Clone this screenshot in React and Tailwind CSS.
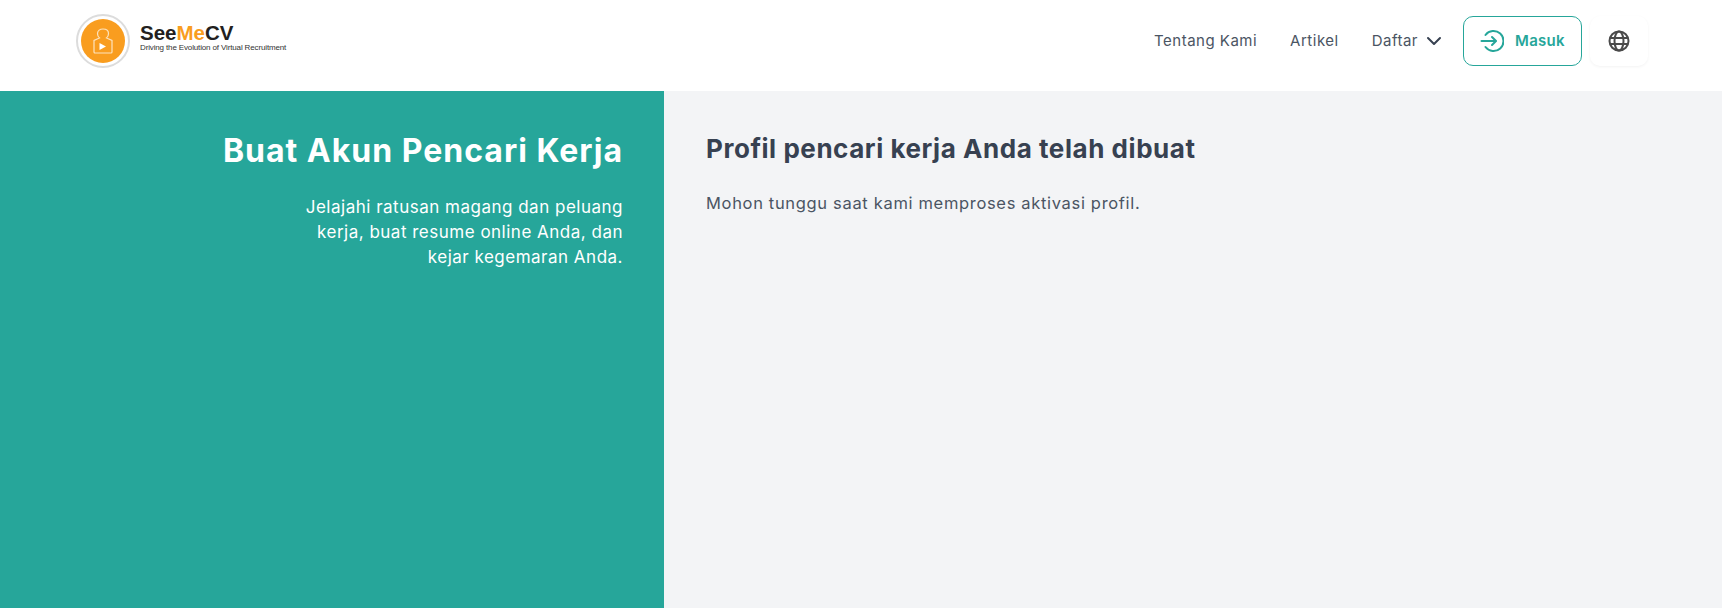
import React from 'react';

const font = { sans: "font-['Inter','Noto_Sans',sans-serif]" };

function Logo() {
  return (
    <div className="flex items-center gap-[10px]">
      <div className="flex h-[54px] w-[54px] items-center justify-center rounded-full border-2 border-[#dcdcdc] bg-white">
        <div className="flex h-[44px] w-[44px] items-center justify-center rounded-full bg-[#f99d1f]">
          <svg width="20" height="26" viewBox="0 0 20 26" fill="none" stroke="#fde3bd" strokeWidth="1.2">
            <path d="M6.5 10C5 9 4.5 7 4.5 5.5 4.5 2.5 7 1 10 1s5.500 1.500 5.500 4.500c0 1.500-.5 3.500-2 4.500l5.500 2.500V24a1 1 0 0 1-1 1H2a1 1 0 0 1-1-1V12.500z" />
            <path d="M6.500 15v7l6.500-3.500z" fill="#fff" stroke="none" />
          </svg>
        </div>
      </div>
      <div className="pb-[7px] font-['Liberation_Sans',sans-serif] text-[#231f20]">
        <div className="text-[20.5px] font-bold leading-[20px]">
          See<span className="text-[#f99d1f]">Me</span>CV
        </div>
        <div className="text-[8px] leading-[9px] tracking-[-0.14px] whitespace-nowrap text-[#333]">Driving the Evolution of Virtual Recruitment</div>
      </div>
    </div>
  );
}

function Header() {
  return (
    <header className="flex h-[91px] items-center justify-between bg-white pb-[9px] pl-[76px] pr-[74px]">
      <Logo />
      <nav className="flex items-center text-[15px] text-[#4b5563]">
        <a className="tracking-[0.5px]">Tentang Kami</a>
        <a className="ml-[33px] tracking-[0.5px]">Artikel</a>
        <a className="ml-[33px] tracking-[0.5px]">Daftar</a>
        <svg className="ml-[8px]" width="16" height="16" viewBox="0 0 16 16" fill="none" stroke="#374151" strokeWidth="2" strokeLinecap="round" strokeLinejoin="round">
          <path d="M2 5l6 6 6-6" />
        </svg>
        <button className="ml-[21px] flex h-[50px] w-[119px] items-center justify-center gap-[11px] rounded-[10px] border border-[#26a69a] bg-white font-semibold text-[#26a69a]">
          <svg width="24" height="24" viewBox="0 0 24 24" fill="none" stroke="#26a69a" strokeWidth="2" strokeLinecap="round" strokeLinejoin="round">
            <path d="M5.500 6a10 10 0 1 1 0 12" />
            <path d="M1.500 12h14" />
            <path d="M12 8l4 4-4 4" />
          </svg>
          <span className="tracking-[0.3px]">Masuk</span>
        </button>
        <button className="ml-[8px] flex h-[50px] w-[58px] items-center justify-center rounded-[10px] bg-white shadow-[0_1px_3px_rgba(0,0,0,0.05)]">
          <svg width="22" height="22" viewBox="0 0 22 22" fill="none" stroke="#4a4a4a" strokeWidth="2">
            <circle cx="11" cy="11" r="9.500" />
            <ellipse cx="11" cy="11" rx="4.500" ry="9.500" />
            <path d="M2 8h18M2 14h18" />
          </svg>
        </button>
      </nav>
    </header>
  );
}

export default function App() {
  return (
    <div className={`flex h-[608px] flex-col overflow-hidden bg-[#f3f4f6] ${font.sans}`}>
      <Header />
      <main className="flex flex-1">
        <aside className="w-[664px] bg-[#26a69a] pl-[200px] pr-[41px] pt-[42px] text-right text-white">
          <h1 className="text-[32px] font-bold leading-[36px] tracking-[1px] whitespace-nowrap">Buat Akun Pencari Kerja</h1>
          <p className="mt-[26px] text-[17px] leading-[25px] tracking-[0.5px]">
            Jelajahi ratusan magang dan peluang<br />kerja, buat resume online Anda, dan<br />kejar kegemaran Anda.
          </p>
        </aside>
        <section className="flex-1 pl-[42px] pt-[40px]">
          <h2 className="text-[26px] font-bold leading-[36px] tracking-[0.55px] text-[#374151]">Profil pencari kerja Anda telah dibuat</h2>
          <p className="mt-[24px] text-[16.5px] leading-[24px] tracking-[0.67px] text-[#4b5563]">Mohon tunggu saat kami memproses aktivasi profil.</p>
        </section>
      </main>
    </div>
  );
}
